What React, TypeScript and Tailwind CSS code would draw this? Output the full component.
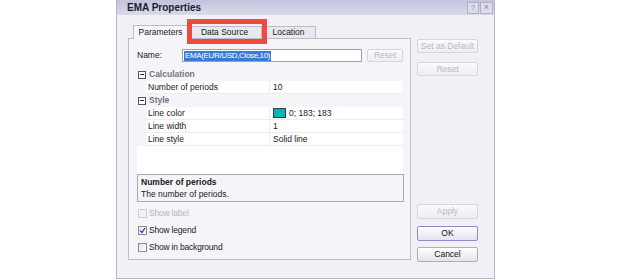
import React from "react";

const font = "font-['Liberation_Sans',Arial,sans-serif]";

const Btn = ({ label, disabled, primary, cls }: { label: string; disabled?: boolean; primary?: boolean; cls?: string }) => (
  <div
    className={`flex items-center justify-center rounded-[2px] border text-[8.5px] leading-none ${
      disabled
        ? "border-[#d6d6e0] bg-gradient-to-b from-[#fbfbfd] to-[#ededf3] text-[#b9b9bf]"
        : primary
        ? "border-[#8d8dcc] bg-gradient-to-b from-[#ffffff] to-[#e3e3ec] text-[#111]"
        : "border-[#aeaec0] bg-gradient-to-b from-[#ffffff] to-[#e3e3ec] text-[#111]"
    } ${cls ?? ""}`}
  >
    {label}
  </div>
);

const Minus = () => (
  <div className="flex h-[8px] w-[8px] items-center justify-center border border-[#555] bg-white">
    <div className="h-[1px] w-[4px] bg-[#333]" />
  </div>
);

const Category = ({ label }: { label: string }) => (
  <div className="flex h-[13px] items-center">
    <div className="flex w-[10px] justify-center">
      <Minus />
    </div>
    <span className="ml-[2px] text-[8.5px] font-semibold text-[#74747e]">{label}</span>
  </div>
);

const Prop = ({ name, children }: { name: string; children: React.ReactNode }) => (
  <div className="flex h-[13px]">
    <div className="w-[9px]" />
    <div className="flex w-[124px] items-center border-b border-r border-[#ececf2] bg-white pl-[2px] text-[8.5px] text-[#1a1a1a]">
      {name}
    </div>
    <div className="flex flex-1 items-center border-b border-[#ececf2] bg-white pl-[3px] text-[8.5px] text-[#1a1a1a]">
      {children}
    </div>
  </div>
);

const Check = ({ label, checked, disabled }: { label: string; checked?: boolean; disabled?: boolean }) => (
  <div className="flex h-[10px] items-center">
    <div
      className={`relative flex h-[9px] w-[9px] items-center justify-center border ${
        disabled ? "border-[#cfcfd6] bg-[#f3f3f6]" : "border-[#8c8c96] bg-gradient-to-br from-[#e4e4ea] to-white"
      }`}
    >
      {checked && (
        <svg width="7" height="7" viewBox="0 0 7 7">
          <path d="M1 3.5 L3 5.5 L6 1" fill="none" stroke="#2b46b4" strokeWidth="1.3" />
        </svg>
      )}
    </div>
    <span className={`ml-[2px] text-[8.5px] tracking-[-0.2px] ${disabled ? "text-[#b6b6bc]" : "text-[#1a1a1a]"}`}>{label}</span>
  </div>
);

export default function App() {
  return (
    <div className={`flex h-[280px] w-[624px] bg-white ${font}`}>
      <div className="ml-[116px] flex h-[279px] w-[379px] flex-col border-x border-b border-[#b6b6ca] bg-[#f0f0f6]">
        {/* title bar */}
        <div className="flex h-[15px] items-center bg-gradient-to-b from-[#c2c3dc] to-[#dadaeb] pl-[10px] pr-[1px]">
          <span className="text-[10px] font-bold text-[#1c1c2c]">EMA Properties</span>
          <div className="ml-auto flex gap-[1px]">
            <div className="flex h-[12px] w-[12px] items-center justify-center border border-[#b0b0c6] bg-[#dcdcea] text-[8px] text-[#8a8aa0]">
              ?
            </div>
            <div className="flex h-[12px] w-[13px] items-center justify-center border border-[#b0b0c6] bg-[#dcdcea] text-[9px] text-[#8a8aa0]">
              ×
            </div>
          </div>
        </div>

        <div className="flex">
          {/* left: tabs */}
          <div className="ml-[11px] flex flex-col">
            <div className="relative mt-[9px] flex h-[14px] items-end pl-[5px]">
              <div className="z-10 -mb-[1px] flex h-[14px] w-[55px] items-center justify-center border border-b-0 border-[#bdbdc8] bg-[#f6f6fa] text-[8.5px] text-[#1a1a1a]">
                Parameters
              </div>
              <div className="flex h-[12px] w-[74px] items-center justify-center border border-l-0 border-b-0 border-[#bdbdc8] bg-[#e8e8f0] text-[8.5px] text-[#1a1a1a]">
                Data Source
              </div>
              <div className="flex h-[12px] w-[54px] items-center justify-center border border-l-0 border-b-0 border-[#bdbdc8] bg-[#e8e8f0] text-[8.5px] text-[#1a1a1a]">
                Location
              </div>
              {/* red highlight annotation */}
              <div className="absolute left-[59px] top-[-5px] z-20 h-[25px] w-[80px] border-[5px] border-[#f04a3c]" />
            </div>

            <div className="flex h-[222px] w-[283px] flex-col border border-[#bdbdc8] bg-[#f5f5f9] pl-[8px] pr-[6px] pt-[10px]">
              {/* name row */}
              <div className="flex h-[13px] items-center">
                <span className="w-[45px] text-[8.5px] text-[#1a1a1a]">Name:</span>
                <div className="flex h-[13px] w-[180px] items-center border border-[#9fa0ae] bg-white pl-[1px]">
                  <span className="bg-[#3a7ad6] px-[1px] text-[8px] leading-[10px] tracking-[-0.35px] text-white">
                    EMA(EUR/USD,Close,10)
                  </span>
                </div>
                <Btn label="Reset" disabled cls="ml-[5px] h-[13px] w-[36px]" />
              </div>

              {/* property grid */}
              <div className="mt-[6px] flex h-[106px] w-[266px] flex-col bg-white">
                <div className="bg-[#f5f5f9]">
                  <Category label="Calculation" />
                  <Prop name="Number of periods">10</Prop>
                  <Category label="Style" />
                  <Prop name="Line color">
                    <div className="mr-[3px] h-[10px] w-[13px] border border-[#3a3a3a] bg-[#00b7b7]" />
                    0; 183; 183
                  </Prop>
                  <Prop name="Line width">1</Prop>
                  <Prop name="Line style">Solid line</Prop>
                </div>
              </div>

              {/* description */}
              <div className="flex h-[28px] w-[267px] flex-col justify-center border border-[#a9a9b0] pl-[3px] text-[8.5px] leading-[12px] text-[#1a1a1a]">
                <span className="font-bold">Number of periods</span>
                <span>The number of periods.</span>
              </div>

              <div className="mt-[6px] flex flex-col gap-[7px] pl-[1px]">
                <Check label="Show label" disabled />
                <Check label="Show legend" checked />
                <Check label="Show in background" />
              </div>
            </div>
          </div>

          {/* right buttons */}
          <div className="ml-[6px] flex w-[61px] flex-col">
            <Btn label="Set as Default" disabled cls="mt-[24px] h-[14px]" />
            <Btn label="Reset" disabled cls="mt-[9px] h-[14px]" />
            <Btn label="Apply" disabled cls="mt-[128px] h-[15px]" />
            <Btn label="OK" primary cls="mt-[7px] h-[15px]" />
            <Btn label="Cancel" cls="mt-[6px] h-[15px]" />
          </div>
        </div>
      </div>
    </div>
  );
}
